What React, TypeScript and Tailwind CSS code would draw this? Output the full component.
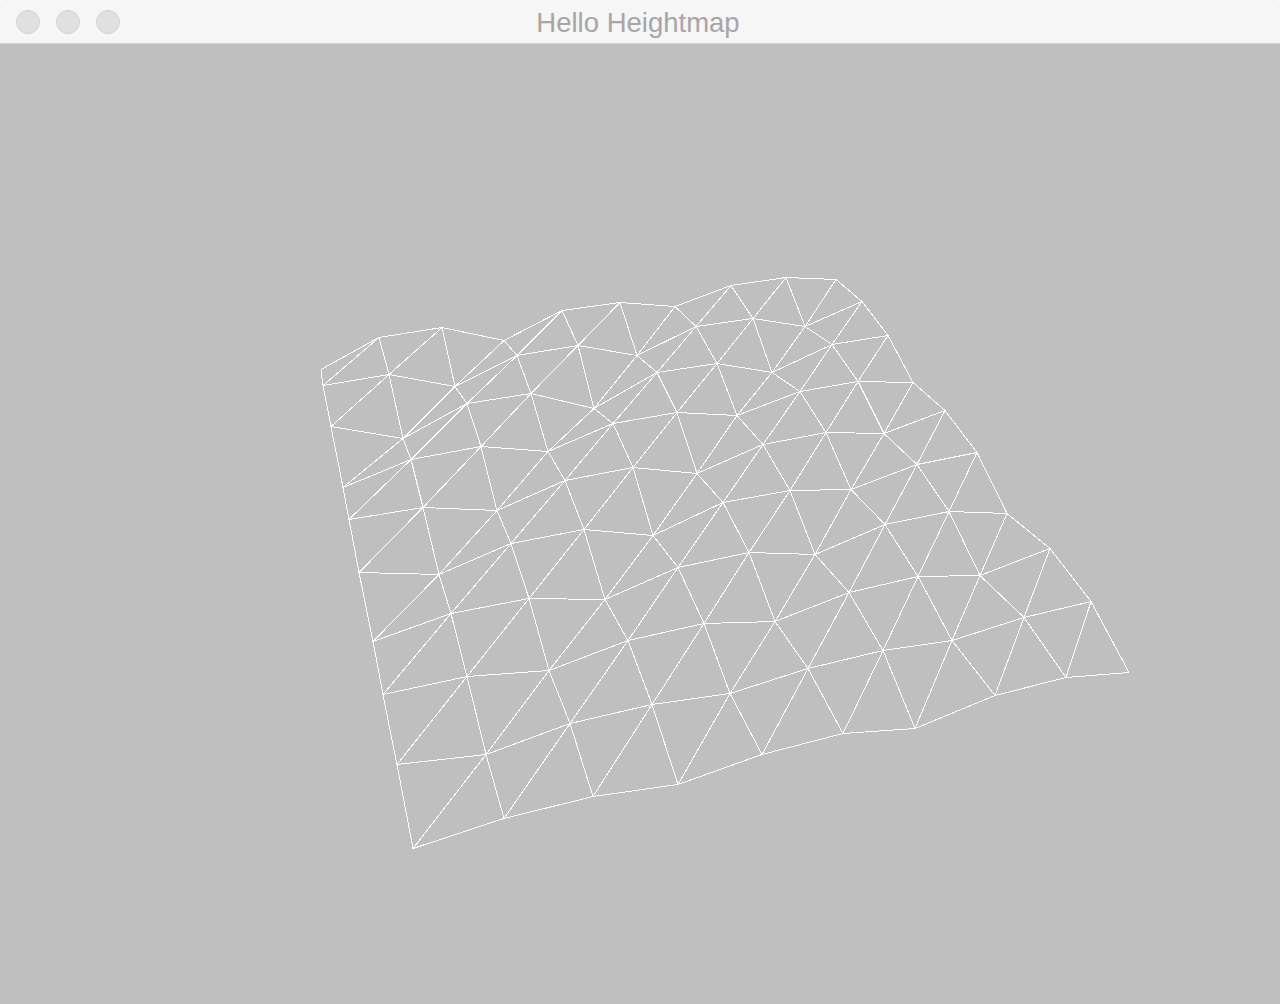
const grid: [number, number][][] = [
  [[413, 848], [504, 818], [593, 796], [678, 784], [762, 754], [843, 733], [915, 728], [995, 695], [1066, 677], [1129, 672]],
  [[397, 764], [486, 754], [570, 723], [652, 704], [730, 693], [808, 668], [883, 650], [952, 640], [1024, 617], [1091, 601]],
  [[383, 694], [467, 676], [549, 670], [628, 640], [704, 623], [775, 621], [849, 592], [918, 576], [980, 575], [1050, 548]],
  [[373, 641], [451, 613], [529, 598], [605, 599], [678, 567], [749, 552], [815, 554], [885, 524], [949, 511], [1007, 513]],
  [[359, 572], [439, 574], [511, 543], [584, 529], [653, 535], [723, 502], [790, 490], [851, 489], [917, 464], [977, 452]],
  [[349, 519], [423, 507], [497, 510], [565, 480], [633, 467], [697, 473], [763, 444], [826, 432], [884, 433], [945, 410]],
  [[343, 487], [411, 459], [481, 446], [548, 451], [613, 423], [677, 412], [737, 415], [800, 391], [858, 381], [913, 382]],
  [[331, 426], [403, 438], [467, 403], [531, 393], [594, 408], [657, 372], [717, 363], [772, 372], [832, 344], [888, 335]],
  [[323, 385], [389, 374], [455, 386], [517, 355], [578, 345], [637, 355], [696, 326], [753, 318], [805, 326], [862, 301]],
  [[321, 369], [379, 337], [442, 327], [504, 340], [562, 310], [620, 302], [675, 306], [731, 285], [786, 277], [836, 279]],
];

function meshPath() {
  let d = "";
  grid.forEach((row, r) =>
    row.forEach(([x, y], c) => {
      if (c < 9) d += `M${x} ${y}L${row[c + 1][0]} ${row[c + 1][1]}`;
      if (r < 9) d += `M${x} ${y}L${grid[r + 1][c][0]} ${grid[r + 1][c][1]}`;
      if (r < 9 && c < 9) d += `M${x} ${y}L${grid[r + 1][c + 1][0]} ${grid[r + 1][c + 1][1]}`;
    })
  );
  return d;
}

const Light = () => (
  <div className="w-6 h-6 rounded-full bg-[#e0e0e0] border border-[#d2d2d2]" />
);

export default function App() {
  return (
    <div className="w-[1280px] h-[1004px] flex flex-col bg-white overflow-hidden font-['Liberation_Sans',Arial,sans-serif]">
      <div className="h-[44px] shrink-0 grid grid-cols-[1fr_auto_1fr] items-center pr-1 bg-[#f6f6f6] border-b border-[#d4d4d4] rounded-t-[4px]">
        <div className="flex gap-4 pl-4">
          <Light />
          <Light />
          <Light />
        </div>
        <div className="text-[27.5px] leading-none pt-0.5 text-[#a8a5a5]">Hello Heightmap</div>
        <div />
      </div>
      <div className="flex-1 bg-[#bfbfbf]">
        <svg viewBox="0 43.5 1280 960" className="block w-full h-full">
          <path d={meshPath()} fill="none" stroke="#ffffff" strokeWidth={1} shapeRendering="crispEdges" />
        </svg>
      </div>
    </div>
  );
}
